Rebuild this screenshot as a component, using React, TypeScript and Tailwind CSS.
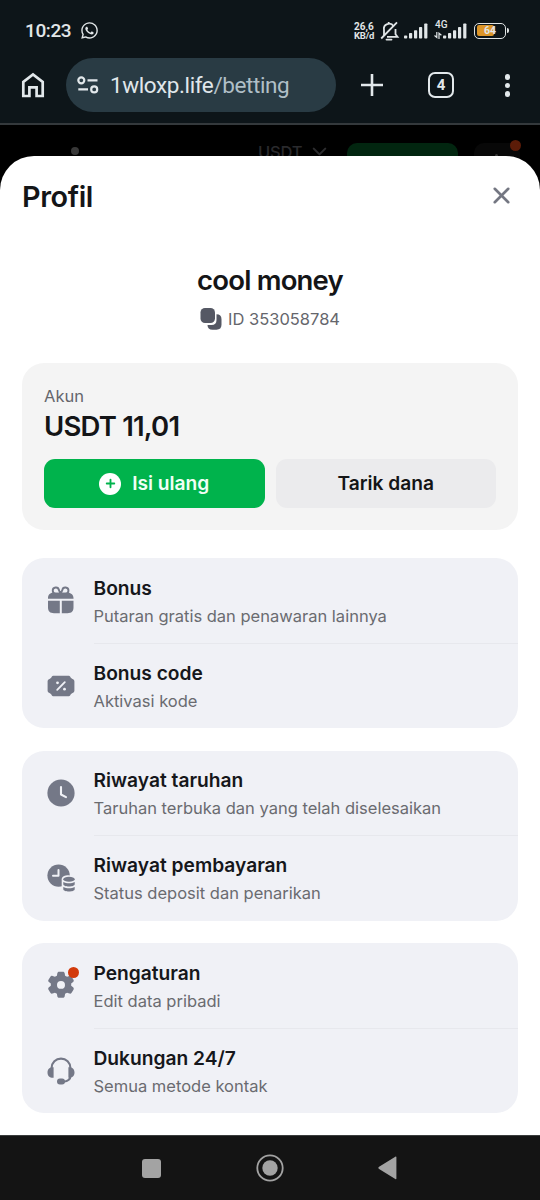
import type { ReactNode } from 'react';
import { ChevronDown, Plus, X } from 'lucide-react';
import { FaWhatsapp } from 'react-icons/fa';
import clsx from 'clsx';

const SignalBars = ({ className }: { className?: string }) => (
  <svg viewBox="0 0 24 16" className={clsx('w-6 h-4', className)} fill="currentColor">
    <rect x="0" y="12.5" width="3.2" height="3" rx="0.8" />
    <rect x="5" y="10" width="3.2" height="5.5" rx="0.8" />
    <rect x="10" y="7.2" width="3.2" height="8.3" rx="0.8" />
    <rect x="15" y="4" width="3.2" height="11.5" rx="0.8" />
    <rect x="20.2" y="0.5" width="3.2" height="15" rx="0.8" />
  </svg>
);

const StatusBar = () => (
  <div className="h-[58px] flex items-center pt-[3px] pl-[25px] pr-[31px] font-['Roboto',sans-serif] text-[#e1e6e8]">
    <span className="mt-px text-[19px] font-medium tracking-[-0.4px] w-[46px] whitespace-nowrap">10:23</span>
    <FaWhatsapp className="ml-[9px] size-[19px]" />
    <div className="ml-auto flex items-center">
      <div className="w-[21px] text-[10px] leading-[9px] font-bold whitespace-nowrap">
        <div>26,6</div>
        <div className="text-[9.5px] tracking-[-0.2px]">KB/d</div>
      </div>
      <svg viewBox="0 0 20 20" className="ml-[5px] size-5" fill="none" stroke="currentColor" strokeWidth="1.8">
        <path d="M4 14.5V9a5.2 5.2 0 0 1 9.6-3.6M8.7 1v2M15.5 8v5.2l2 2.6H7" />
        <path d="M1.2 17.5 17 1.3" />
        <path d="M6.5 18.6h5" strokeLinecap="round" />
      </svg>
      <SignalBars className="ml-[4px]" />
      <div className="relative ml-[15px]">
        <SignalBars />
        <span className="absolute -top-[3px] -left-[8px] text-[10px] leading-[10px] font-medium">4G</span>
        <svg viewBox="0 0 8 7" className="absolute -left-[9px] bottom-0 w-2 h-[7px]" fill="none" stroke="currentColor" strokeWidth="1.2">
          <path d="M2.8 0v5.5L.5 3.5M5 7V1.2l2.4 2" />
        </svg>
      </div>
      <div className="ml-[7px] flex items-center">
        <div className="relative w-8 h-4 rounded-[5px] border-[1.5px] border-[#dfe3e4] p-[1.5px]">
          <div className="h-full w-[17px] rounded-[2px] bg-[#dc9528]" />
          <span className="absolute inset-0 text-center text-[10.5px] leading-[13.5px] font-bold">64</span>
        </div>
        <div className="ml-px w-[2px] h-[5px] rounded-r bg-[#dfe3e4]" />
      </div>
    </div>
  </div>
);

const BrowserBar = () => (
  <div className="h-[67px] flex items-start border-b-2 border-[#34393c] pl-[21px] pr-[30px] text-[#e2e8eb]">
    <svg viewBox="0 0 24 26" className="mt-[14px] w-6 h-[26px]" fill="none" stroke="currentColor" strokeWidth="2.7">
      <path d="M2.3 24V10L12 2.4 21.7 10v14h-6.1v-8.6H8.4V24z" />
    </svg>
    <div className="ml-[21px] flex items-center w-[270px] h-[54px] rounded-full bg-[#293b44] pl-[11px]">
      <svg viewBox="0 0 22 18" className="w-[22px] h-[18px]" fill="none" stroke="currentColor" strokeWidth="2.2">
        <circle cx="4.3" cy="4.3" r="3" />
        <path d="M10.5 4.3H20.5M1.3 13.4H11" />
        <circle cx="17.2" cy="13.4" r="3" />
      </svg>
      <div className="mt-[2px] ml-[11px] text-[22.5px] tracking-[-0.4px] whitespace-nowrap font-['Roboto',sans-serif] text-[#e0e7eb]">
        1wloxp.life<span className="text-[#b0bfc7]">/betting</span>
      </div>
    </div>
    <svg viewBox="0 0 22 22" className="mt-4 ml-[25px] size-[22px]" fill="none" stroke="currentColor" strokeWidth="2.6">
      <path d="M11 0v22M0 11h22" />
    </svg>
    <div className="mt-[14px] ml-[45px] flex size-[26px] items-center justify-center rounded-[7px] border-[2.5px] border-current font-['Roboto',sans-serif] text-[15px] leading-none font-bold">
      4
    </div>
    <div className="mt-4 ml-auto flex flex-col gap-[3px]">
      <div className="size-[5.5px] rounded-full bg-current" />
      <div className="size-[5.5px] rounded-full bg-current" />
      <div className="size-[5.5px] rounded-full bg-current" />
    </div>
  </div>
);

// Top of the page that stays visible under the dark overlay
const DimmedHeader = () => (
  <div className="h-[31px] flex items-start pl-[71px] pr-[19px]">
    <div className="mt-[22px] size-2 rounded-full bg-[#383838]" />
    <span className="mt-[16px] ml-[179px] w-[45px] text-[16.5px] leading-[22px] font-medium tracking-[-0.2px] text-[#2a2a2d]">USDT</span>
    <ChevronDown className="mt-[15px] ml-[5px] size-[23px] shrink-0 text-[#2c2c2e]" strokeWidth={2.2} />
    <div className="mt-[18px] ml-[16px] w-[111px] h-10 shrink-0 rounded-[10px] bg-[#022610]" />
    <div className="relative mt-[18px] ml-[16px] w-[46px] h-10 shrink-0 rounded-[10px] bg-[#080808]">
      <div className="absolute left-[21px] top-[11px] size-[3px] rounded-full bg-[#3a3a3a]" />
      <div className="absolute -right-[1px] -top-[3px] size-[11px] rounded-full bg-[#5c1c08]" />
    </div>
  </div>
);

const GiftIcon = () => (
  <svg viewBox="0 0 28 28" className="size-7">
    <path d="M13.5 7.7H8.8a3.1 3.1 0 1 1 3.1-3.6l1.6 3.6 1.8-3.6a3.1 3.1 0 1 1 3.1 3.6h-4.9" fill="none" stroke="currentColor" strokeWidth="1.9" />
    <path d="M6 6.8h15c3.2 0 5.5 2.3 5.5 5.2v.8H1V12c0-2.9 1.8-5.2 5-5.2zM1 14.8h11.8v12.4H7c-4 0-6-1.8-6-5.7zM14.8 14.8h11.7v6.7c0 3.9-2 5.7-6 5.7h-5.7z" fill="currentColor" />
  </svg>
);

const CouponIcon = () => (
  <svg viewBox="0 0 28 28" className="size-7">
    <path d="M6.2 3.7h15.6c1.3 0 1.4 1.2 2 2 .7.8 1.8 1.2 2.7 1.8.7.5.9 1.2.9 2v9c0 .8-.2 1.5-.9 2-.9.6-2 1-2.7 1.8-.6.8-.7 2-2 2H6.2c-1.3 0-1.4-1.2-2-2-.7-.8-1.8-1.2-2.7-1.8-.7-.5-.9-1.2-.9-2v-9c0-.8.2-1.5.9-2 .9-.6 2-1 2.7-1.8.6-.8.7-2 2-2z" fill="currentColor" />
    <path d="m10.2 17.9 7.6-7.8" stroke="#f0f1f6" strokeWidth="1.8" strokeLinecap="round" />
    <circle cx="10.5" cy="10.8" r="1.4" fill="#f0f1f6" />
    <circle cx="17.5" cy="17.2" r="1.4" fill="#f0f1f6" />
  </svg>
);

const ClockIcon = () => (
  <svg viewBox="0 0 28 28" className="size-7">
    <circle cx="14" cy="14" r="13.6" fill="currentColor" />
    <path d="M14 8v7.5l5 2.6" fill="none" stroke="#f0f1f6" strokeWidth="2.1" strokeLinecap="round" strokeLinejoin="round" />
  </svg>
);

const PaymentHistoryIcon = () => (
  <svg viewBox="0 0 28 28" className="size-7">
    <circle cx="11.6" cy="11.6" r="11.2" fill="currentColor" />
    <path d="M11.5 6v5.8H6" fill="none" stroke="#f0f1f6" strokeWidth="2" strokeLinecap="round" strokeLinejoin="round" />
    <path d="M14.7 15.2c0-2.6 3-4 6.9-4s7 1.4 7 4V29H14.7z" fill="#f0f1f6" />
    <g fill="currentColor">
      <ellipse cx="22" cy="15.3" rx="5.7" ry="2.5" />
      <path d="M16.3 18c3 1.8 8.4 1.8 11.4 0v2.2c0 3-11.4 3-11.4 0zM16.3 22.9c3 1.8 8.4 1.8 11.4 0v2.3c0 3-11.4 3-11.4 0z" />
    </g>
  </svg>
);

const GearIcon = () => (
  <div className="relative size-7">
    <svg viewBox="0 0 28 28" className="size-7">
      <path
        fillRule="evenodd"
        d="M12.2.5h3.6c1 0 1.5.6 1.7 1.5l.4 2.2 1.9 1.1 2.2-.8c.9-.3 1.7-.1 2.1.7l1.8 3c.5.9.3 1.6-.4 2.2l-1.8 1.5v2.2l1.8 1.5c.7.6.9 1.4.4 2.2l-1.8 3c-.4.8-1.2 1.1-2.1.8l-2.2-.8-1.9 1.1-.4 2.3c-.2.9-.7 1.5-1.7 1.5h-3.6c-1 0-1.5-.6-1.7-1.5l-.4-2.3-1.9-1.1-2.2.8c-.9.3-1.7 0-2.1-.8l-1.8-3c-.5-.8-.3-1.6.4-2.2l1.8-1.5v-2.2l-1.8-1.5c-.7-.6-.9-1.3-.4-2.2l1.8-3c.4-.8 1.2-1 2.1-.7l2.2.8 1.9-1.1.4-2.2c.2-.9.7-1.5 1.7-1.5zM14 9.4a3.8 3.8 0 1 0 0 7.6 3.8 3.8 0 0 0 0-7.6z"
        transform="translate(-.7 .3) scale(1.05 1.03)"
        fill="currentColor"
      />
    </svg>
    <div className="absolute -right-[4px] -top-[4px] size-[11px] rounded-full bg-[#d23a0b]" />
  </div>
);

const HeadsetIcon = () => (
  <svg viewBox="0 0 28 28" className="size-7">
    <path d="M4.6 12V11a9.3 9.3 0 0 1 18.8 0v8c0 3.4-2.8 5.2-7 5.8" fill="none" stroke="currentColor" strokeWidth="2.1" />
    <path d="M6.6 10.2v10.6C3 21 .5 19.5.5 15.6S3 10 6.6 10.2zM21.4 10.2v10.6c3.6.2 6.1-1.3 6.1-5.2s-2.5-5.6-6.1-5.4z" fill="currentColor" />
    <rect x="10" y="21.6" width="8" height="5.8" rx="2.9" fill="currentColor" />
  </svg>
);

type MenuItem = { icon: ReactNode; title: string; subtitle: string };

const menuGroups: MenuItem[][] = [
  [
    { icon: <GiftIcon />, title: 'Bonus', subtitle: 'Putaran gratis dan penawaran lainnya' },
    { icon: <CouponIcon />, title: 'Bonus code', subtitle: 'Aktivasi kode' },
  ],
  [
    { icon: <ClockIcon />, title: 'Riwayat taruhan', subtitle: 'Taruhan terbuka dan yang telah diselesaikan' },
    { icon: <PaymentHistoryIcon />, title: 'Riwayat pembayaran', subtitle: 'Status deposit dan penarikan' },
  ],
  [
    { icon: <GearIcon />, title: 'Pengaturan', subtitle: 'Edit data pribadi' },
    { icon: <HeadsetIcon />, title: 'Dukungan 24/7', subtitle: 'Semua metode kontak' },
  ],
];

const MenuCard = ({ items }: { items: MenuItem[] }) => (
  <div className="h-[170px] rounded-[22px] bg-[#f0f1f6]">
    {items.map((item, i) => (
      <div key={item.title} className="flex pl-[24.5px]">
        <div className="mt-[28px] mr-[19px] size-7 shrink-0 text-[#747887]">{item.icon}</div>
        <div className={clsx('h-[85.5px] flex-1 whitespace-nowrap', i === 0 ? 'border-b border-[#e7e8ed] pt-[15.7px]' : 'pt-[15px]')}>
          <div className="text-[19.2px] leading-[28px] font-semibold text-[#16171b]">{item.title}</div>
          <div className="text-[16.5px] leading-[28px] text-[#6a6b70]">{item.subtitle}</div>
        </div>
      </div>
    ))}
  </div>
);

const ProfileSheet = () => (
  <main className="relative h-[979px] rounded-t-[34px] bg-white px-[22px] text-[#141517]">
    <div className="flex h-[78px] items-center justify-between">
      <h1 className="pt-[3px] text-[28.8px] font-semibold tracking-[-0.4px]">Profil</h1>
      <X className="mr-[3px] size-[27px] text-[#747782]" strokeWidth={2.3} />
    </div>

    <div className="flex h-[129px] flex-col items-center pt-[28px]">
      <h2 className="text-[27.5px] leading-[36px] font-semibold tracking-[-0.8px]">cool money</h2>
      <div className="mt-[9px] flex items-center gap-[6px] text-[16.5px] leading-[24px] text-[#65666c]">
        <svg viewBox="0 0 22 22" className="size-[22px] text-[#555864]" fill="currentColor">
          <rect x="0.5" y="0" width="14.5" height="15" rx="4.5" />
          <path d="M16.5 6.2c3.3 0 5 1.7 5 5v5.6c0 3.2-1.7 4.9-5 4.9h-4c-3.3 0-5-1.7-5-4.8h4c3.3 0 5-1.7 5-5z" />
        </svg>
        <span>ID 353058784</span>
      </div>
    </div>

    <div className="h-[167px] rounded-[22px] bg-[#f4f4f4] px-[22px] pt-[22px]">
      <div className="text-[16.5px] leading-[22px] text-[#65666c]">Akun</div>
      <div className="mt-px text-[27.5px] leading-[36px] font-semibold tracking-[-0.8px]">USDT 11,01</div>
      <div className="mt-[15px] flex gap-[11px] text-[19.2px] font-semibold">
        <button className="flex h-[49px] flex-1 items-center justify-center gap-[11px] rounded-[11px] bg-[#00b34c] text-[#f0fff5]">
          <span className="flex size-[22px] items-center justify-center rounded-full bg-white text-[#00b34c]">
            <Plus className="size-[13px]" strokeWidth={3.4} />
          </span>
          Isi ulang
        </button>
        <button className="h-[49px] flex-1 rounded-[11px] bg-[#ebebed]">Tarik dana</button>
      </div>
    </div>

    <div className="mt-[28px] flex flex-col gap-[22.6px]">
      {menuGroups.map((items) => (
        <MenuCard key={items[0].title} items={items} />
      ))}
    </div>
  </main>
);

const NavigationBar = () => (
  <div className="flex h-[65px] items-center border-t border-[#3a3d3d] bg-[#141414] pl-[142px] text-[#a3a3a3]">
    <div className="size-[19px] rounded-[3px] bg-current" />
    <svg viewBox="0 0 28 28" className="ml-[94.5px] size-7" fill="currentColor">
      <circle cx="14" cy="14" r="12.7" fill="none" stroke="currentColor" strokeWidth="1.8" />
      <circle cx="14" cy="14" r="7.7" />
    </svg>
    <svg viewBox="0 0 19 24" className="ml-[94px] w-[19px] h-6" fill="currentColor">
      <path d="M17.3.8 1.1 10.8c-1 .7-1 1.5 0 2.2l16.2 10c.7.4 1.1.2 1.1-.5V1.3c0-.7-.4-.9-1.1-.5z" />
    </svg>
  </div>
);

export default function App() {
  return (
    <div className="w-[540px] h-[1200px] overflow-hidden bg-black font-['Inter',sans-serif]">
      <div className="bg-[#0d1519]">
        <StatusBar />
        <BrowserBar />
      </div>
      <DimmedHeader />
      <ProfileSheet />
      <NavigationBar />
    </div>
  );
}
